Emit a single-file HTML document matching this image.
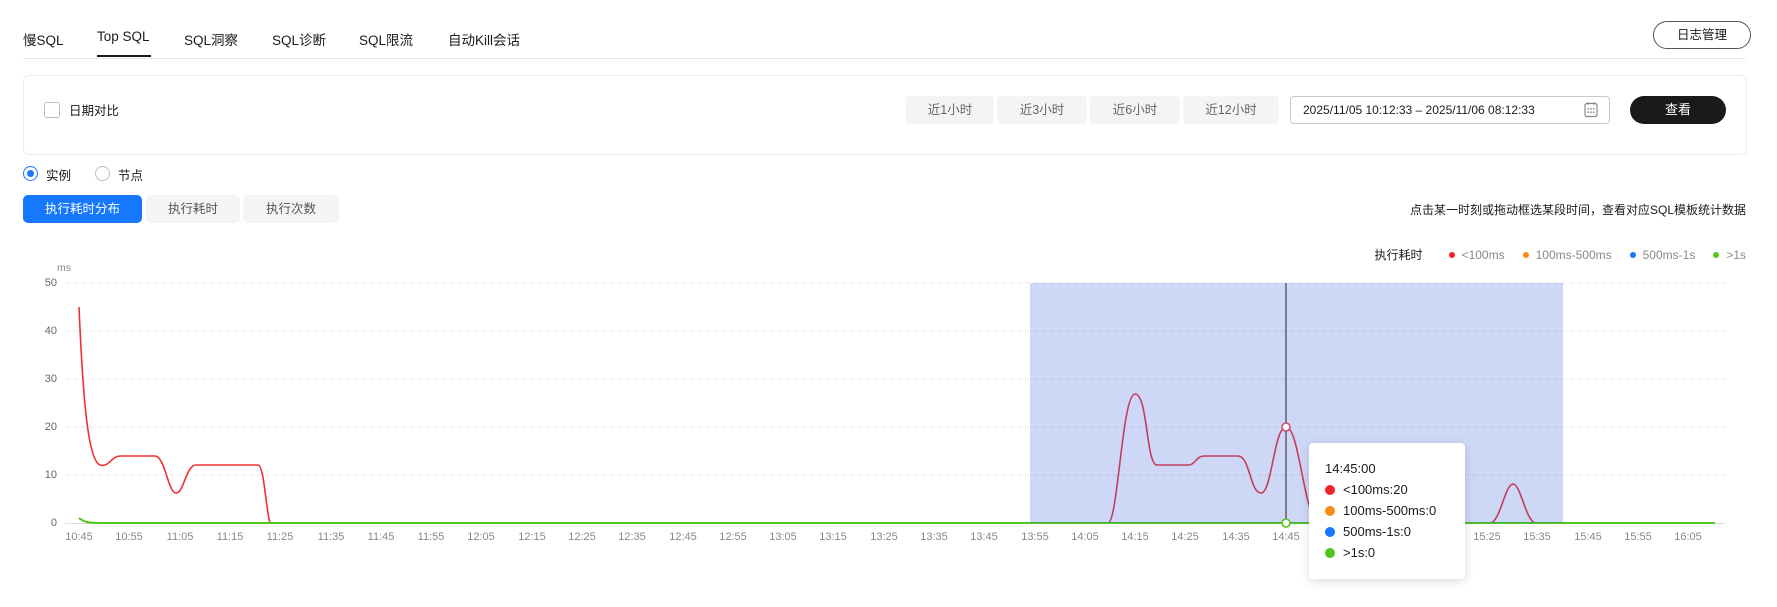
<!DOCTYPE html>
<html><head><meta charset="utf-8"><style>
body{margin:0;width:1777px;height:607px;background:#fff;font-family:"Liberation Sans","Noto Sans CJK SC",sans-serif;color:#1a1a1a;position:relative;overflow:hidden;font-size:13px}
.a{position:absolute;white-space:nowrap}
.tab{top:29px;font-size:13.5px}
.qb{top:96px;height:28px;background:#f4f4f4;border-radius:4px;color:#666;font-size:12.5px;line-height:28px;text-align:center}
.seg{top:195px;height:28px;border-radius:5px;line-height:28px;text-align:center;font-size:12.5px}
.yl{left:36px;width:21px;text-align:right;font-size:11px;color:#666}
.tl{top:531px;font-size:11px;color:#888;width:40px;text-align:center;margin-left:-20px}
.dot{display:inline-block;width:6px;height:6px;border-radius:50%;margin-right:7px;vertical-align:1px}
.lg{margin-left:18px}
.td{display:inline-block;width:10px;height:10px;border-radius:50%;margin-right:8px;vertical-align:-1px}
</style></head><body>
<div class="a tab" style="left:23px">慢SQL</div>
<div class="a tab" style="left:97px">Top SQL</div>
<div class="a" style="left:97px;top:55px;width:54px;height:2px;background:#1a1a1a"></div>
<div class="a tab" style="left:184px">SQL洞察</div>
<div class="a tab" style="left:272px">SQL诊断</div>
<div class="a tab" style="left:359px">SQL限流</div>
<div class="a tab" style="left:448px">自动Kill会话</div>
<div class="a" style="left:23px;top:58px;width:1723px;height:1px;background:#e8e8e8"></div>
<div class="a" style="left:1653px;top:21px;width:96px;height:26px;border:1px solid #555;border-radius:14px;text-align:center;line-height:26px;font-size:12.5px">日志管理</div>

<div class="a" style="left:23px;top:75px;width:1722px;height:78px;border:1px solid #ececec;border-radius:6px"></div>
<div class="a" style="left:44px;top:102px;width:14px;height:14px;border:1px solid #bbb;border-radius:3px"></div>
<div class="a" style="left:69px;top:100px;font-size:12.5px">日期对比</div>
<div class="a qb" style="left:906px;width:88px">近1小时</div>
<div class="a qb" style="left:997px;width:90px">近3小时</div>
<div class="a qb" style="left:1090px;width:90px">近6小时</div>
<div class="a qb" style="left:1183px;width:96px">近12小时</div>
<div class="a" style="left:1290px;top:96px;height:26px;border:1px solid #c8c8c8;border-radius:4px;font-size:12px;line-height:26px;padding-left:12px;width:306px">2025/11/05 10:12:33 – 2025/11/06 08:12:33</div>
<svg class="a" style="left:1584px;top:101px" width="14" height="17" viewBox="0 0 14 17"><rect x="1" y="2.5" width="12" height="13" rx="2" fill="none" stroke="#888" stroke-width="1.2"/><line x1="4" y1="1" x2="4" y2="4" stroke="#888"/><line x1="10" y1="1" x2="10" y2="4" stroke="#888"/><g fill="#888"><rect x="3.5" y="7" width="1.5" height="1.5"/><rect x="6.3" y="7" width="1.5" height="1.5"/><rect x="9" y="7" width="1.5" height="1.5"/><rect x="3.5" y="10.5" width="1.5" height="1.5"/><rect x="6.3" y="10.5" width="1.5" height="1.5"/><rect x="9" y="10.5" width="1.5" height="1.5"/></g></svg>
<div class="a" style="left:1630px;top:96px;width:96px;height:28px;background:#1a1a1a;color:#fff;border-radius:14px;text-align:center;line-height:28px;font-size:13px">查看</div>

<div class="a" style="left:23px;top:166px;width:15px;height:15px;border:1px solid #1677ff;border-radius:50%;box-sizing:border-box"></div>
<div class="a" style="left:27px;top:170px;width:7px;height:7px;background:#1677ff;border-radius:50%"></div>
<div class="a" style="left:46px;top:165px;font-size:12.5px">实例</div>
<div class="a" style="left:95px;top:166px;width:15px;height:15px;border:1px solid #bbb;border-radius:50%;box-sizing:border-box"></div>
<div class="a" style="left:118px;top:165px;font-size:12.5px">节点</div>

<div class="a seg" style="left:23px;width:119px;background:#1677ff;color:#fff">执行耗时分布</div>
<div class="a seg" style="left:146px;width:94px;background:#f4f4f4;color:#555">执行耗时</div>
<div class="a seg" style="left:243px;width:96px;background:#f4f4f4;color:#555">执行次数</div>
<div class="a" style="right:31px;top:201px;font-size:12px">点击某一时刻或拖动框选某段时间，查看对应SQL模板统计数据</div>
<div class="a" style="right:31px;top:246px;font-size:12px;color:#888"><span style="color:#1a1a1a;margin-right:26px">执行耗时</span><span class="dot" style="background:#f5222d"></span>&lt;100ms<span class="dot lg" style="background:#fa8c16"></span>100ms-500ms<span class="dot lg" style="background:#1677ff"></span>500ms-1s<span class="dot lg" style="background:#52c41a"></span>&gt;1s</div>

<div class="a" style="left:57px;top:262px;font-size:10.5px;color:#888">ms</div>
<div class="a yl" style="top:277px">50</div>
<div class="a yl" style="top:325px">40</div>
<div class="a yl" style="top:373px">30</div>
<div class="a yl" style="top:421px">20</div>
<div class="a yl" style="top:469px">10</div>
<div class="a yl" style="top:517px">0</div>

<svg class="a" style="left:0;top:0" width="1777" height="607">
<g stroke="#e6e6e6" stroke-dasharray="4 4"><line x1="65" y1="283" x2="1725" y2="283"/><line x1="65" y1="331" x2="1725" y2="331"/><line x1="65" y1="379" x2="1725" y2="379"/><line x1="65" y1="427" x2="1725" y2="427"/><line x1="65" y1="475" x2="1725" y2="475"/></g>
<line x1="65" y1="523.5" x2="1725" y2="523.5" stroke="#ddd"/>
<path d="M79,307 C83,400 88,460 100,465 C108,468 112,456 120,456 L155,456 C165,456 168,493 176,493 C184,493 186,465 196,465 L258,465 C264,465 266,510 270,523 M1108,523 C1118,523 1122,394 1135,394 C1148,394 1146,465 1157,465 L1188,465 C1196,465 1195,456 1205,456 L1238,456 C1250,456 1250,493 1261,493 C1272,493 1274,427 1286,427 C1300,427 1304,523 1320,523 M1490,523 C1500,523 1505,484 1513,484 C1521,484 1526,523 1536,523" fill="none" stroke="#f03030" stroke-width="1.6"/>
<path d="M79,518 C84,522 88,523 100,523 L1715,523" fill="none" stroke="#52c41a" stroke-width="2"/>
<rect x="1030" y="283" width="533" height="240" fill="rgb(60,100,220)" fill-opacity="0.25"/>
<line x1="1286" y1="283" x2="1286" y2="523" stroke="#222"/>
<circle cx="1286" cy="427" r="4" fill="#fff" stroke="#d04a6a" stroke-width="1.5"/>
<circle cx="1286" cy="523" r="4" fill="#fff" stroke="#52c41a" stroke-width="1.5"/>
</svg>
<div class="a" style="left:0;top:0">
<div class="a tl" style="left:79px">10:45</div><div class="a tl" style="left:129px">10:55</div><div class="a tl" style="left:180px">11:05</div><div class="a tl" style="left:230px">11:15</div><div class="a tl" style="left:280px">11:25</div><div class="a tl" style="left:331px">11:35</div><div class="a tl" style="left:381px">11:45</div><div class="a tl" style="left:431px">11:55</div><div class="a tl" style="left:481px">12:05</div><div class="a tl" style="left:532px">12:15</div><div class="a tl" style="left:582px">12:25</div><div class="a tl" style="left:632px">12:35</div><div class="a tl" style="left:683px">12:45</div><div class="a tl" style="left:733px">12:55</div><div class="a tl" style="left:783px">13:05</div><div class="a tl" style="left:833px">13:15</div><div class="a tl" style="left:884px">13:25</div><div class="a tl" style="left:934px">13:35</div><div class="a tl" style="left:984px">13:45</div><div class="a tl" style="left:1035px">13:55</div><div class="a tl" style="left:1085px">14:05</div><div class="a tl" style="left:1135px">14:15</div><div class="a tl" style="left:1185px">14:25</div><div class="a tl" style="left:1236px">14:35</div><div class="a tl" style="left:1286px">14:45</div><div class="a tl" style="left:1336px">14:55</div><div class="a tl" style="left:1387px">15:05</div><div class="a tl" style="left:1437px">15:15</div><div class="a tl" style="left:1487px">15:25</div><div class="a tl" style="left:1537px">15:35</div><div class="a tl" style="left:1588px">15:45</div><div class="a tl" style="left:1638px">15:55</div><div class="a tl" style="left:1688px">16:05</div>
</div>

<div class="a" style="left:1309px;top:443px;width:156px;height:136px;background:#fff;border-radius:4px;box-shadow:0 2px 10px rgba(0,0,0,0.15);font-size:13px;line-height:21px;padding:15px 0 0 16px;box-sizing:border-box">
<div>14:45:00</div>
<div><span class="td" style="background:#f5222d"></span>&lt;100ms:20</div>
<div><span class="td" style="background:#fa8c16"></span>100ms-500ms:0</div>
<div><span class="td" style="background:#1677ff"></span>500ms-1s:0</div>
<div><span class="td" style="background:#52c41a"></span>&gt;1s:0</div>
</div>
</body></html>
